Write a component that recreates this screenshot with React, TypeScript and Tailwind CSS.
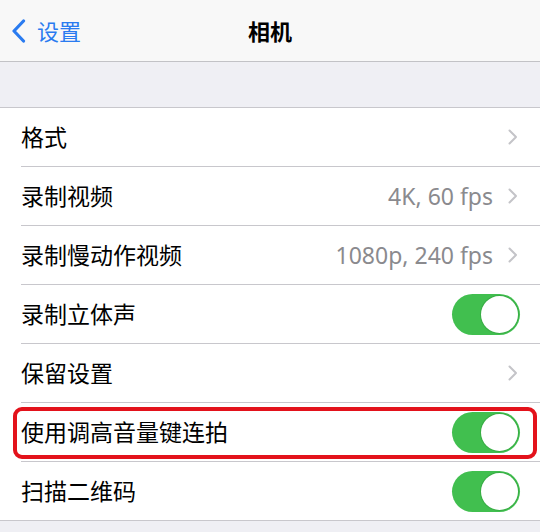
const font = {
  fontFamily: '"Noto Sans", "Noto Sans CJK SC", sans-serif',
};

type Row = {
  label: string;
  value?: string;
  kind: "link" | "toggle";
  marked?: boolean;
};

const rows: Row[] = [
  { label: "格式", kind: "link" },
  { label: "录制视频", value: "4K, 60 fps", kind: "link" },
  { label: "录制慢动作视频", value: "1080p, 240 fps", kind: "link" },
  { label: "录制立体声", kind: "toggle" },
  { label: "保留设置", kind: "link" },
  { label: "使用调高音量键连拍", kind: "toggle", marked: true },
  { label: "扫描二维码", kind: "toggle" },
];

const Chevron = () => (
  <svg width="10" height="16" viewBox="0 0 10 16" className="ml-[15px] mr-[22px]">
    <path
      d="M1.5 1.5 L8 8 L1.5 14.5"
      fill="none"
      stroke="#c4c4c8"
      strokeWidth="2"
      strokeLinecap="round"
      strokeLinejoin="round"
    />
  </svg>
);

const Toggle = () => (
  <div className="mr-[20px] flex h-[41px] w-[68px] items-center justify-end rounded-full bg-[#41bf4f] pr-[2px]">
    <div className="h-[37px] w-[37px] rounded-full bg-white shadow-[0_0_0_1px_rgba(40,140,50,0.35)]" />
  </div>
);

const App = () => {
  return (
    <div className="h-[532px] w-[540px] overflow-hidden bg-[#efeff4]" style={font}>
      <header className="relative flex h-[62px] items-center border-b border-[#c2c2c6] bg-[#f8f8f8]">
        <div className="flex items-center pl-[11px] text-[22px] text-[#2a7bf0]">
          <svg width="15" height="24" viewBox="0 0 15 24">
            <path
              d="M12.5 2 L3 12 L12.5 22"
              fill="none"
              stroke="#2a7bf0"
              strokeWidth="3.2"
              strokeLinecap="round"
              strokeLinejoin="round"
            />
          </svg>
          <span className="ml-[11px] leading-none">设置</span>
        </div>
        <h1 className="absolute left-0 right-0 text-center text-[22px] font-bold leading-none text-black">
          相机
        </h1>
      </header>

      <div className="h-[45px]" />

      <ul className="border-y border-[#c8c7cc] bg-white">
        {rows.map((row, i) => (
          <li key={row.label} className="relative">
            <div className="flex h-[58px] items-center pl-[21px]">
              <span className="flex-1 text-[23px] text-black">{row.label}</span>
              {row.value && (
                <span className="text-[23px] text-[#8a8a8e]">{row.value}</span>
              )}
              {row.kind === "link" ? <Chevron /> : <Toggle />}
            </div>
            {i < rows.length - 1 && <div className="ml-[21px] h-px bg-[#c8c7cc]" />}
            {row.marked && (
              <div className="absolute left-[13px] right-[3px] top-[4px] h-[52px] rounded-[9px] border-[4px] border-[#e3121b]" />
            )}
          </li>
        ))}
      </ul>
    </div>
  );
};

export default App;
